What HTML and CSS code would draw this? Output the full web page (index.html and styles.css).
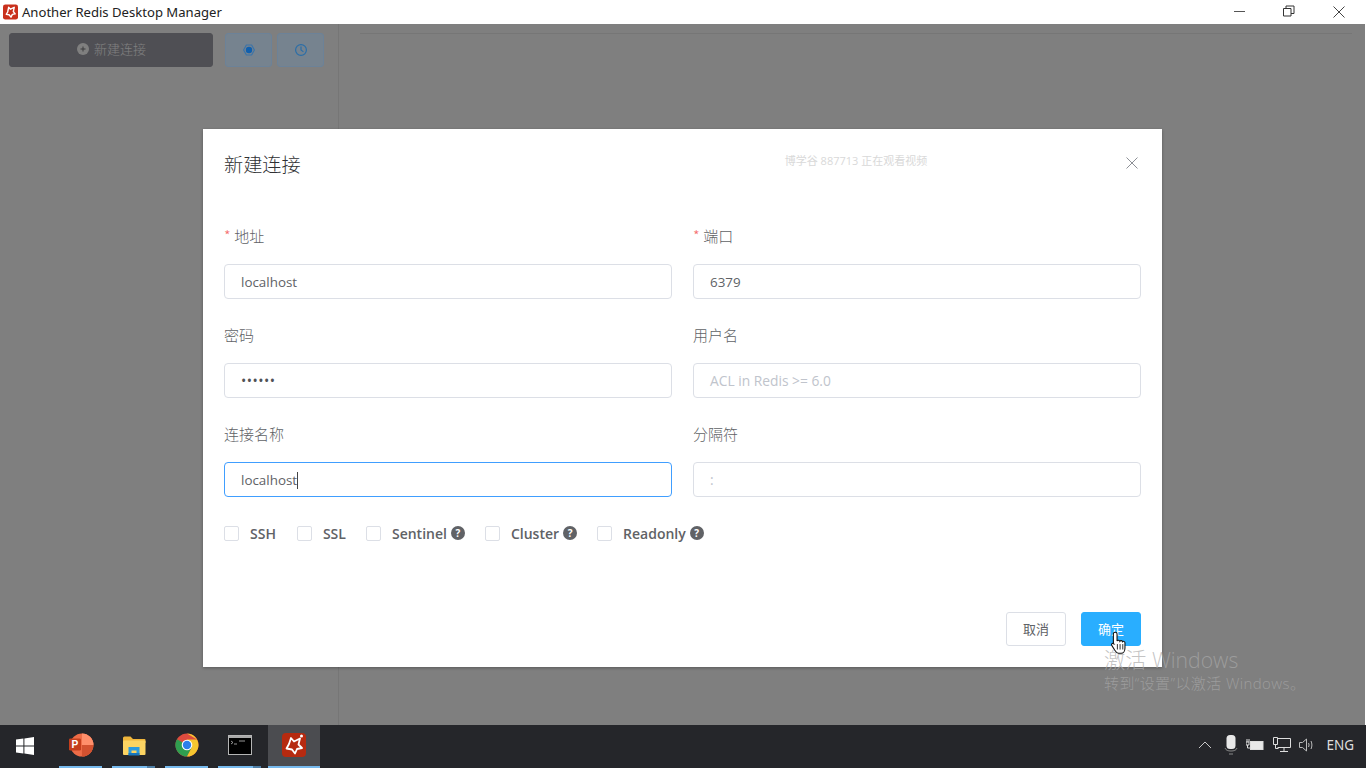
FILE: index.html
```html
<!DOCTYPE html>
<html lang="zh-CN">
<head>
<meta charset="utf-8">
<title>Another Redis Desktop Manager</title>
<link rel="stylesheet" href="styles.css">
</head>
<body>
<div class="window">
  <header class="titlebar">
    <svg class="app-icon" viewBox="0 0 16 16"><rect width="16" height="16" rx="2.500" fill="#c9301c"/><path d="M6 3 L8 5 L12 3 L11 7.500 L13 10 L10 10.500 L8.500 13.500 L6.500 11 L3.500 10.500 L5 8 Z" fill="none" stroke="#fff" stroke-width="1.500" stroke-linejoin="round"/></svg>
    <span class="app-title">Another Redis Desktop Manager</span>
    <div class="win-controls">
      <svg class="win-btn" viewBox="0 0 46 24"><path d="M18 11.500h11" stroke="#555" fill="none"/></svg>
      <svg class="win-btn" viewBox="0 0 46 24"><path d="M17.500 8.500h7.500v7.500h-7.500z M20 8.500v-2.500h8v7.500h-3" stroke="#333" fill="none"/></svg>
      <svg class="win-btn" viewBox="0 0 46 24"><path d="M17.500 6.500l11 11m0-11l-11 11" stroke="#444" fill="none"/></svg>
    </div>
  </header>

  <main class="app">
    <aside class="sidebar">
      <div class="side-tools">
        <button class="new-btn"><span class="plus-dot"><svg viewBox="0 0 12 12"><path d="M3.500 6h5M6 3.500v5" stroke="#77777a" stroke-width="1"/></svg></span>新建连接</button>
        <button class="tool-btn"><svg viewBox="0 0 14 14"><path d="M4.400 2h5.200L12.400 7 9.600 12H4.400L1.600 7z" fill="none" stroke="#3c74a8" stroke-width="1.200" stroke-linejoin="round"/><circle cx="7" cy="7" r="3.200" fill="#0f5fae"/></svg></button>
        <button class="tool-btn"><svg viewBox="0 0 14 14"><circle cx="7" cy="7" r="5.400" fill="none" stroke="#2a6ea8" stroke-width="1.200"/><path d="M7 3.600V7l2.400 1.900" fill="none" stroke="#2a6ea8" stroke-width="1.200"/></svg></button>
      </div>
    </aside>
    <section class="content"><div class="content-rule"></div></section>

    <div class="overlay">
      <div class="dialog">
        <div class="dialog-head">
          <h2 class="dialog-title">新建连接</h2>
          <span class="watermark">博学谷 887713 正在观看视频</span>
          <svg class="dialog-close" viewBox="0 0 12 12"><path d="M.500.500l11 11m0-11l-11 11" stroke="#8d9096" fill="none"/></svg>
        </div>
        <div class="form-grid">
          <div class="field"><label class="field-label"><i class="req">*</i>地址</label><div class="input">localhost</div></div>
          <div class="field"><label class="field-label"><i class="req">*</i>端口</label><div class="input">6379</div></div>
          <div class="field"><label class="field-label">密码</label><div class="input dots">••••••</div></div>
          <div class="field"><label class="field-label">用户名</label><div class="input placeholder">ACL in Redis &gt;= 6.0</div></div>
          <div class="field"><label class="field-label">连接名称</label><div class="input focused">localhost<span class="caret"></span></div></div>
          <div class="field"><label class="field-label">分隔符</label><div class="input placeholder">:</div></div>
        </div>
        <div class="checks">
          <label class="check"><span class="box"></span>SSH</label>
          <label class="check"><span class="box"></span>SSL</label>
          <label class="check"><span class="box"></span>Sentinel<span class="help">?</span></label>
          <label class="check"><span class="box"></span>Cluster<span class="help">?</span></label>
          <label class="check"><span class="box"></span>Readonly<span class="help">?</span></label>
        </div>
        <div class="dialog-foot">
          <button class="btn">取消</button>
          <button class="btn primary">确定</button>
        </div>
      </div>
    </div>

    <div class="activate">
      <div class="activate-main">激活 Windows</div>
      <div class="activate-sub">转到“设置”以激活 Windows。</div>
    </div>
    <svg class="cursor" viewBox="0 0 16 24"><path d="M4.500 2c1 0 1.700.700 1.700 1.800v6.400c.300-1 2.300-1 2.600.200.500-.900 2.300-.800 2.500.400.600-.700 2.200-.400 2.200 1v4.700c0 2.500-1.300 5-3.500 5H7.500C5.800 21.500 5 20 4 18.500L1.300 14.200c-.800-1.300.800-2.600 1.900-1.400l-.400-.100V3.800C2.800 2.700 3.500 2 4.500 2z" fill="#fff" stroke="#111" stroke-width="1"/><path d="M6.500 13v5M9 13v5M11.500 13v5" stroke="#111" stroke-width=".8"/></svg>
  </main>

  <footer class="taskbar">
    <svg class="start" viewBox="0 0 18 18"><path d="M0 2.600 7.400 1.500v7H0zM8.400 1.400 18 0v8.500H8.400zM0 9.500h7.400v7L0 15.400zM8.400 9.500H18V18l-9.600-1.400z" fill="#fff"/></svg>
    <div class="task-item">
      <svg viewBox="0 0 28 26"><circle cx="15" cy="13" r="12.500" fill="#ed6c47"/><path d="M15 .5a12.500 12.500 0 0 1 12.500 12.500H15z" fill="#ff8f6b"/><path d="M15 13h12.500A12.500 12.500 0 0 1 15 25.500z" fill="#d35230"/><rect x="1" y="6" width="13" height="13" rx="1.500" fill="#c43e1c"/><text x="7.500" y="16.500" class="ppt-p">P</text></svg>
    </div>
    <div class="task-item multi">
      <svg viewBox="0 0 24 24"><path d="M1 5a1.500 1.500 0 0 1 1.500-1.500h6L11 6h11.500A1 1 0 0 1 23.500 7v3H1z" fill="#f0b63c"/><rect x="1" y="7.500" width="22.500" height="14.500" rx="1" fill="#fcd462"/><path d="M6.500 22v-8h11v8h-3v-4.500h-5V22z" fill="#2b9be0"/><rect x="6.500" y="20" width="11" height="2.500" fill="#1877bd"/></svg>
    </div>
    <div class="task-item">
      <svg viewBox="0 0 24 24"><circle cx="12" cy="12" r="11.500" fill="#dd4b3e"/><path d="M12 12 2 6.200A11.500 11.500 0 0 0 12 23.500L17.200 14z" fill="#2f9e4f"/><path d="M12 .5A11.500 11.500 0 0 1 22 6.500H12L17 14 12 23.500A11.500 11.500 0 0 0 23.500 12 11.500 11.500 0 0 0 22 6.500z" fill="#f6c62f"/><circle cx="12" cy="12" r="5.300" fill="#fff"/><circle cx="12" cy="12" r="4.200" fill="#2d7fea"/></svg>
    </div>
    <div class="task-item multi term">
      <svg viewBox="0 0 24 20"><rect x=".5" y=".5" width="23" height="19" fill="#000" stroke="#b5b5b5"/><rect x="1" y="1" width="22" height="2" fill="#a9a9a9"/><path d="M3 6l2 1.500-2 1.500M6 9h3M11 6h6" stroke="#bbb" fill="none" stroke-width=".8"/></svg>
    </div>
    <div class="task-item active">
      <svg viewBox="0 0 24 24"><rect width="24" height="24" rx="4" fill="#b62a10"/><path d="M9 5l3 3.500L18 5.500 16.500 11.500 20 15l-5 1-2 4.500-3-4-5.500-1 2.500-4.500z" fill="none" stroke="#fff" stroke-width="1.800" stroke-linejoin="round"/><circle cx="19.500" cy="3" r="1.500" fill="#fff"/></svg>
    </div>
    <div class="tray">
      <svg class="t-chev" viewBox="0 0 14 8"><path d="M1 7l6-6 6 6" stroke="#c8c8c8" fill="none"/></svg>
      <svg class="t-mic" viewBox="0 0 14 20"><rect x="2.500" y="0" width="9" height="14" rx="3.500" fill="#e8e8e8"/><path d="M1 13c1 2.500 3 3 6 3s5-.500 6-3M5 19h4" stroke="#888" fill="none"/></svg>
      <svg class="t-bat" viewBox="0 0 18 12"><rect x="4.500" y="2.500" width="12.500" height="8" fill="#e8e8e8" stroke="#ddd"/><path d="M0 3h3v3H0zM1 0v3M3 0v3M1.500 6v3h3" stroke="#ddd" fill="none"/></svg>
      <svg class="t-net" viewBox="0 0 18 16"><path d="M4.500 1.500h13v9h-13M7 14.500h8M11 10.500v4M.5.500h4v7h-4zM2.500 7.500v4h3" stroke="#ddd" fill="none"/></svg>
      <svg class="t-vol" viewBox="0 0 16 14"><path d="M.500 4.500h3l4-3.500v12l-4-3.500h-3zM9.500 5c.7 1.300.7 2.700 0 4M12 3c1.200 2.500 1.200 5.500 0 8" stroke="#bbb" fill="none"/></svg>
      <span class="t-lang">ENG</span>
    </div>
  </footer>
</div>
</body>
</html>
```

FILE: styles.css
```css
* { box-sizing: border-box; }
html, body { margin: 0; padding: 0; width: 100%; height: 100%; overflow: hidden; }
body { font-family: "Open Sans", "Noto Sans CJK SC", sans-serif; background: #fff; }
button { font-family: inherit; cursor: pointer; }
h2 { margin: 0; font-weight: 400; }

.window { display: flex; flex-direction: column; height: 768px; width: 1366px; }

/* title bar */
.titlebar { height: 24px; flex: none; display: flex; align-items: center; padding-left: 3px; background: #fff; }
.app-icon { width: 15px; height: 16px; margin-right: 4px; }
.app-title { font: 13.100px "Noto Sans", "Liberation Sans", sans-serif; color: #222; }
.win-controls { margin-left: auto; display: flex; padding-right: 2px; }
.win-btn { width: 50px; height: 24px; }

/* application */
.app { flex: 1; position: relative; display: flex; background: #fff; }
.sidebar { width: 339px; flex: none; border-right: 1px solid #ececec; padding: 9px 0 0 9px; }
.side-tools { display: flex; }
.new-btn { width: 204px; height: 34px; background: #9e9ea8; border: 1px solid #9e9ea8; border-radius: 3px; color: #fff; font-size: 13px; line-height: 30px; font-weight: 300; display: flex; align-items: flex-start; justify-content: flex-start; padding: 0 0 0 67px; }
.plus-dot { width: 12px; height: 12px; border-radius: 50%; background: #fff; margin: 9px 5px 0 0; display: flex; }
.tool-btn { position: relative; z-index: 2; width: 47px; height: 34px; margin-left: 5px; background: #76838f; border: 1px solid #6c8298; border-radius: 3px; padding: 0; display: flex; align-items: center; justify-content: center; }
.side-tools .new-btn + .tool-btn { margin-left: 12px; }
.tool-btn svg { width: 14px; height: 14px; }
.content { flex: 1; padding: 9px 14px 0 21px; }
.content-rule { height: 1px; background: #ececec; }

.overlay { position: absolute; z-index: 1; inset: 0 1px 0 0; background: rgba(0,0,0,.5); padding: 105px 0 0 203px; }
.dialog { width: 959px; height: 538px; background: #fff; padding: 0 21px; box-shadow: 0 1px 3px rgba(0,0,0,.3); display: flex; flex-direction: column; }
.dialog-head { height: 84px; flex: none; display: flex; align-items: flex-start; padding-top: 19px; }
.dialog-title { font-size: 19.200px; line-height: 32px; color: #303133; font-family: "Noto Sans CJK SC", sans-serif; font-weight: 300; }
.watermark { margin-left: 484px; margin-top: 5px; font-size: 11px; line-height: 16px; color: #d9d9d9; }
.dialog-close { width: 12px; height: 12px; margin-left: auto; margin-top: 9px; margin-right: 3px; }

.form-grid { display: grid; grid-template-columns: 448px 448px; column-gap: 21px; row-gap: 0; }
.field { height: 99px; }
.field-label { display: block; height: 51px; line-height: 46px; font-size: 15px; color: #606266; font-family: "Noto Sans CJK SC", sans-serif; font-weight: 300; }
.req { font-style: normal; color: #f56c6c; margin-right: 3.500px; font-size: 15px; }
.input { height: 35px; border: 1px solid #dcdfe6; border-radius: 4px; padding: 0 16px; line-height: 34px; font-size: 13.400px; color: #606266; white-space: pre; }
.placeholder { color: #c0c4cc; font-size: 13.800px; }
.dots { font-size: 14px; letter-spacing: .5px; color: #505256; }
.focused { border-color: #409eff; }
.caret { display: inline-block; width: 1px; height: 17px; background: #444; vertical-align: -4px; }

.checks { display: flex; align-items: center; height: 36px; margin-top: 5px; font-size: 14px; font-weight: 600; color: #606266; }
.check { display: flex; align-items: center; margin-right: 20px; }
.check:first-child { margin-right: 21px; }
.box { width: 15px; height: 15px; border: 1px solid #dcdfe6; border-radius: 2px; margin-right: 11px; background: #fff; }
.help { width: 14px; height: 14px; border-radius: 50%; background: #606266; color: #fff; font-size: 10px; font-weight: 700; line-height: 14px; text-align: center; margin-left: 4px; }

.dialog-foot { margin-top: auto; margin-bottom: 21px; display: flex; justify-content: flex-end; }
.btn { width: 60px; height: 34px; background: #fff; border: 1px solid #dcdfe6; border-radius: 3px; font-size: 13px; color: #606266; padding: 0 0 2px; margin-left: 15px; font-family: "Noto Sans CJK SC", sans-serif; }
.primary { background: #29aeff; border-color: #29aeff; color: #fff; }

.activate { position: absolute; z-index: 3; left: 1104px; top: 624px; color: rgba(170,170,170,.7); pointer-events: none; }
.activate-main { font-size: 21.200px; line-height: 24px; font-weight: 300; }
.activate-sub { font-size: 15px; line-height: 23px; font-weight: 300; letter-spacing: .4px; }
.cursor { position: absolute; z-index: 4; left: 1110px; top: 606px; width: 18px; height: 26px; }

/* taskbar */
.taskbar { height: 43px; flex: none; background: #25262a; display: flex; align-items: center; padding-left: 16px; }
.start { width: 18px; height: 18px; margin-right: 25px; margin-bottom: 2px; }
.task-item { width: 53px; height: 43px; display: flex; align-items: center; justify-content: center; position: relative; padding: 0 10px 3px 0; }
.task-item::after { content: ""; position: absolute; left: 0; bottom: 0; width: 43px; height: 2px; background: #76b9ed; }
.task-item.multi::after { background: linear-gradient(to right, #76b9ed 35px, #4f7fa6 35px); }
.task-item svg { width: 26px; height: 24px; }
.task-item.term svg { width: 24px; height: 20px; }
.task-item.active { width: 52px; margin-left: -3px; background: #4b4c50; padding: 0 0 3px; }
.task-item.active::after { width: 52px; }
.ppt-p { font: 700 11px "Liberation Sans", sans-serif; fill: #fff; text-anchor: middle; }
.tray { margin-left: auto; display: flex; align-items: center; padding: 0 12px 3px 0; color: #ddd; }
.t-chev { width: 14px; height: 8px; margin-right: 12px; }
.t-mic { width: 14px; height: 20px; margin-right: 8px; }
.t-bat { width: 18px; height: 12px; margin-right: 9px; }
.t-net { width: 18px; height: 16px; margin-right: 8px; }
.t-vol { width: 16px; height: 14px; margin-right: 11px; }
.t-lang { font: 13.500px "Noto Sans", sans-serif; }
```
